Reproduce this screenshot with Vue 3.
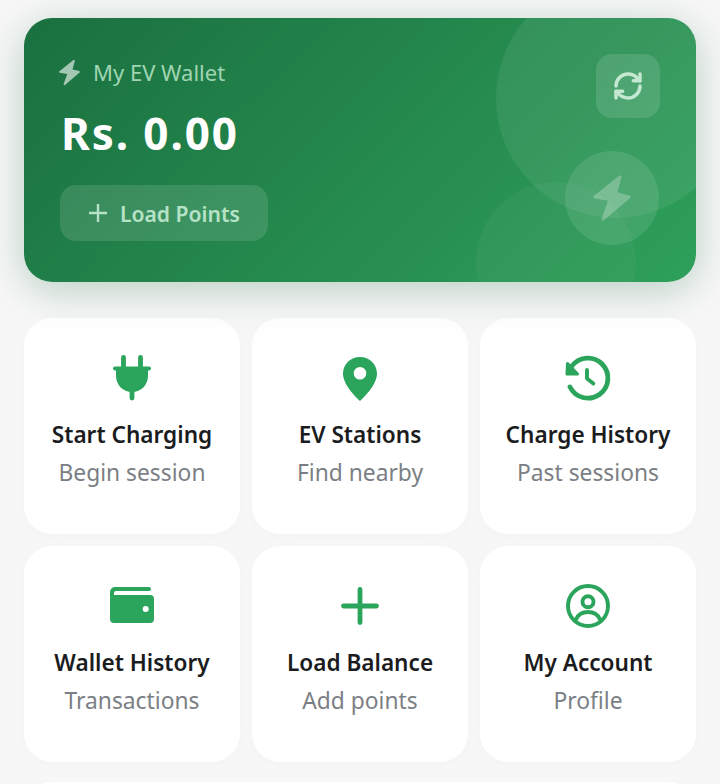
<script setup>
const tiles = [
  { key: 'plug', title: 'Start Charging', sub: 'Begin session' },
  { key: 'pin', title: 'EV Stations', sub: 'Find nearby' },
  { key: 'history', title: 'Charge History', sub: 'Past sessions' },
  { key: 'wallet', title: 'Wallet History', sub: 'Transactions' },
  { key: 'plus', title: 'Load Balance', sub: 'Add points' },
  { key: 'account', title: 'My Account', sub: 'Profile' }
]
</script>

<template>
  <div class="page">
    <section class="wallet">
      <span class="blob blob-a"></span>
      <span class="blob blob-b"></span>
      <span class="blob blob-c">
        <svg class="big-bolt" viewBox="0 0 40 48"><path class="bolt-shape" d="M28 3 3 23l15 2.500L11 45l26-22-13.500-3.500z" /></svg>
      </span>
      <div class="wallet-main">
        <div class="wallet-label">
          <svg class="small-bolt" viewBox="0 0 40 48"><path class="bolt-shape" d="M28 3 3 23l15 2.500L11 45l26-22-13.500-3.500z" /></svg>
          <span>My EV Wallet</span>
        </div>
        <div class="balance">Rs. 0.00</div>
        <button class="load-btn">
          <svg class="btn-plus" viewBox="0 0 20 20"><path d="M10 1v18M1 10h18" /></svg>
          <span>Load Points</span>
        </button>
      </div>
      <button class="refresh" aria-label="Refresh">
        <svg viewBox="0 0 24 24">
          <path d="M3 12a9 9 0 0 1 9-9 9.75 9.75 0 0 1 6.74 2.74L21 8" />
          <path d="M21 3v5h-5" />
          <path d="M21 12a9 9 0 0 1-9 9 9.75 9.75 0 0 1-6.74-2.74L3 16" />
          <path d="M8 16H3v5" />
        </svg>
      </button>
    </section>

    <section class="grid">
      <article v-for="t in tiles" :key="t.key" class="tile">
        <svg class="icon" viewBox="0 0 48 48">
          <g v-if="t.key === 'plug'">
            <path class="line" d="M15.500 3.500v11M32.500 3.500v11M24 36v8" />
            <path class="line bar" d="M7 14.500h34" />
            <path class="solid" d="M8 14.500h32V22c0 9-7 16-16 16S8 31 8 22z" />
          </g>
          <path v-else-if="t.key === 'pin'" class="solid" fill-rule="evenodd" d="M24 3C14.600 3 7 10.400 7 19.500 7 30 18.500 42 24 47c5.500-5 17-17 17-27.500C41 10.400 33.400 3 24 3zm0 10a6.300 6.300 0 1 1 0 12.600A6.300 6.300 0 0 1 24 13z" />
          <g v-else-if="t.key === 'history'">
            <path class="line" d="M8 12A20 20 0 1 1 6 33" />
            <path class="line thin" d="M23 16v8.500l6.300 5" />
            <path class="solid arrow" d="M3.500 9.500 3 20h10.500z" />
          </g>
          <g v-else-if="t.key === 'wallet'">
            <path class="solid" d="M7 5h34a2 2 0 0 1 0 4H8a2 2 0 0 0-2 2v4H2v-5a5 5 0 0 1 5-5z" />
            <path class="solid" fill-rule="evenodd" d="M6 13h36a4 4 0 0 1 4 4v20a4 4 0 0 1-4 4H6a4 4 0 0 1-4-4V17a4 4 0 0 1 4-4zm31.700 11a3 3 0 1 0 0 6 3 3 0 0 0 0-6z" />
          </g>
          <path v-else-if="t.key === 'plus'" class="line" d="M24 7.500v33M7.500 24h33" />
          <g v-else>
            <circle class="line thin" cx="24" cy="24" r="20" />
            <circle class="line thin" cx="24" cy="19.700" r="5.500" />
            <path class="line thin" d="M12 37.500c2-5 7-7.500 12-7.500s10 2.500 12 7.500" />
          </g>
        </svg>
        <h3 class="title">{{ t.title }}</h3>
        <p class="sub">{{ t.sub }}</p>
      </article>
    </section>

    <div class="next-card"></div>
  </div>
</template>

<style scoped>
.page {
  height: 784px;
  overflow: hidden;
  box-sizing: border-box;
  padding: 18px 24px 0;
  background: #f7f7f7;
  font-family: "Noto Sans", "Liberation Sans", sans-serif;
}
.wallet {
  position: relative;
  display: flex;
  justify-content: space-between;
  box-sizing: border-box;
  height: 264px;
  padding: 36px;
  border-radius: 28px;
  overflow: hidden;
  background: linear-gradient(135deg, #1a7040 0%, #2ea05a 100%);
  box-shadow: 0 8px 40px rgba(26, 100, 60, 0.28);
}
.blob {
  position: absolute;
  border-radius: 50%;
  background: rgba(255, 255, 255, 0.07);
}
.blob-a { width: 240px; height: 240px; top: -40px; right: -40px; }
.blob-b { width: 160px; height: 160px; bottom: -60px; right: 60px; background: rgba(255, 255, 255, 0.04); }
.blob-c {
  width: 94px;
  height: 94px;
  top: 133px;
  right: 37px;
  display: flex;
  align-items: center;
  justify-content: center;
  background: rgba(255, 255, 255, 0.1);
}
.big-bolt { width: 40px; height: 48px; opacity: 0.25; }
.bolt-shape {
  fill: #fff;
  stroke: #fff;
  stroke-width: 3;
  stroke-linejoin: round;
}
.wallet-main { position: relative; display: flex; flex-direction: column; align-items: flex-start; }
.wallet-label {
  display: flex;
  align-items: center;
  gap: 12px;
  height: 38px;
  margin-top: -1px;
  font-size: 22px;
  color: #a0d5b3;
}
.small-bolt { width: 23px; height: 27px; opacity: 0.6; margin-left: -2px; }
.balance {
  margin: 12px 0 0 1px;
  height: 60px;
  line-height: 60px;
  font-size: 44px;
  font-weight: 700;
  letter-spacing: 1.900px;
  color: #fff;
}
.load-btn {
  display: flex;
  align-items: center;
  gap: 12px;
  height: 56px;
  margin-top: 22px;
  padding: 0 28px;
  border: 0;
  border-radius: 16px;
  background: rgba(255, 255, 255, 0.12);
  color: #b6e2c7;
  font: 600 21.100px "Noto Sans", "Liberation Sans", sans-serif;
}
.btn-plus { width: 20px; height: 20px; fill: none; stroke: #b6e2c7; stroke-width: 2.400; }
.refresh {
  position: relative;
  display: flex;
  align-items: center;
  justify-content: center;
  width: 64px;
  height: 64px;
  padding: 0;
  border: 0;
  border-radius: 16px;
  background: rgba(255, 255, 255, 0.12);
}
.refresh svg {
  width: 32px;
  height: 32px;
  fill: none;
  stroke: #c4e8d1;
  stroke-width: 2.600;
  stroke-linecap: round;
  stroke-linejoin: round;
}
.grid {
  display: grid;
  grid-template-columns: repeat(3, 216px);
  gap: 12px;
  margin-top: 36px;
}
.tile {
  display: flex;
  flex-direction: column;
  align-items: center;
  box-sizing: border-box;
  height: 216px;
  padding-top: 36px;
  border-radius: 28px;
  background: #fff;
  box-shadow: 0 2px 12px rgba(0, 0, 0, 0.02);
}
.icon { width: 48px; height: 48px; overflow: visible; }
.solid { fill: #2ba55c; }
.line {
  fill: none;
  stroke: #2ba55c;
  stroke-width: 4.800;
  stroke-linecap: round;
  stroke-linejoin: round;
}
.bar { stroke-width: 4; }
.thin { stroke-width: 3.900; }
.arrow { stroke: #2ba55c; stroke-width: 3; stroke-linejoin: round; }
.title {
  margin: 16px 0 0;
  height: 34px;
  line-height: 34px;
  font-size: 22.600px;
  font-weight: 600;
  color: #1b1c1e;
}
.sub {
  margin: 5px 0 0;
  height: 32px;
  line-height: 32px;
  font-size: 22.800px;
  color: #7b7f85;
}
.next-card {
  height: 80px;
  margin-top: 20px;
  border-radius: 28px;
  background: #fff;
}
</style>
